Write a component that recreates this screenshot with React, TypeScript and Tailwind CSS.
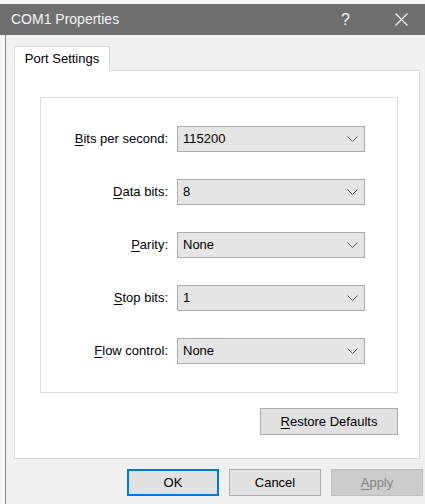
import React from "react";

const font = { fontFamily: '"Liberation Sans", Arial, sans-serif' };

const rows = [
  { key: "B", rest: "its per second:", value: "115200" },
  { key: "D", rest: "ata bits:", value: "8" },
  { key: "P", rest: "arity:", value: "None" },
  { key: "S", rest: "top bits:", value: "1" },
  { key: "F", rest: "low control:", value: "None" },
];

function Chevron() {
  return (
    <svg width="11" height="6" viewBox="0 0 11 6" className="shrink-0">
      <polyline
        points="0.5,0.5 5.5,5.5 10.5,0.5"
        fill="none"
        stroke="#5a5a5a"
        strokeWidth="1"
      />
    </svg>
  );
}

function Combo({ value }: { value: string }) {
  return (
    <div className="w-[188px] h-[26px] flex items-center justify-between pl-[5px] pr-[6px] bg-[#e5e5e5] border border-[#acacac] text-[13px] text-black">
      <span>{value}</span>
      <Chevron />
    </div>
  );
}

export default function App() {
  return (
    <div
      className="w-[425px] h-[504px] flex flex-col bg-[#f0f0f0] overflow-hidden"
      style={font}
    >
      <div className="h-[4px] bg-[#f7f7f7]" />
      {/* title bar */}
      <div className="h-[31px] bg-[#6f6f6f] flex items-center text-[#f4f4f4]">
        <span className="ml-[11px] text-[14px]">COM1 Properties</span>
        <span className="ml-auto text-[16px] mr-[45px]">?</span>
        <svg width="13" height="13" viewBox="0 0 13 13" className="mr-[17px]">
          <path d="M0.5 0.5 L12.5 12.5 M12.5 0.5 L0.5 12.5" stroke="#f4f4f4" strokeWidth="1.1" />
        </svg>
      </div>

      <div className="flex flex-1">
        <div className="w-[5px] bg-[#f7f7f7]" />
        <div className="w-px bg-[#8c8c8c]" />
        <div className="flex-1 flex flex-col pt-[11px]">
          {/* tab strip */}
          <div className="ml-[8px] flex">
            <div className="relative z-10 -mb-px w-[96px] h-[25px] bg-white border-t border-l border-r border-[#d9d9d9] flex items-center justify-center text-[13px] text-black">
              Port Settings
            </div>
          </div>
          {/* tab page */}
          <div className="ml-[8px] w-[406px] bg-white border border-[#dadada] flex flex-col pt-[26px] pb-[23px]">
            <div className="ml-[25px] mr-[21px] border border-[#dcdcdc] pt-[28px] pb-[28px] grid grid-cols-[127px_188px] gap-x-[9px] gap-y-[27px] items-center">
              {rows.map((r) => (
                <React.Fragment key={r.key}>
                  <div className="text-right text-[13px] text-black">
                    <span className="underline underline-offset-2">{r.key}</span>
                    {r.rest}
                  </div>
                  <Combo value={r.value} />
                </React.Fragment>
              ))}
            </div>
            <div className="flex justify-end mr-[21px] mt-[15px]">
              <button className="w-[138px] h-[27px] bg-[#e1e1e1] border border-[#adadad] text-[13px] text-black">
                <span className="underline underline-offset-2">R</span>estore Defaults
              </button>
            </div>
          </div>
          {/* dialog buttons */}
          <div className="flex justify-end gap-[10px] mt-[10px] pr-[2px]">
            <button className="w-[92px] h-[27px] bg-[#e1e1e1] border-2 border-[#0078d7] text-[13px] text-black">
              OK
            </button>
            <button className="w-[92px] h-[27px] bg-[#e1e1e1] border border-[#adadad] text-[13px] text-black">
              Cancel
            </button>
            <button className="w-[92px] h-[27px] bg-[#cccccc] border border-[#bfbfbf] text-[13px] text-[#838383]">
              <span className="underline underline-offset-2">A</span>pply
            </button>
          </div>
        </div>
      </div>
    </div>
  );
}
